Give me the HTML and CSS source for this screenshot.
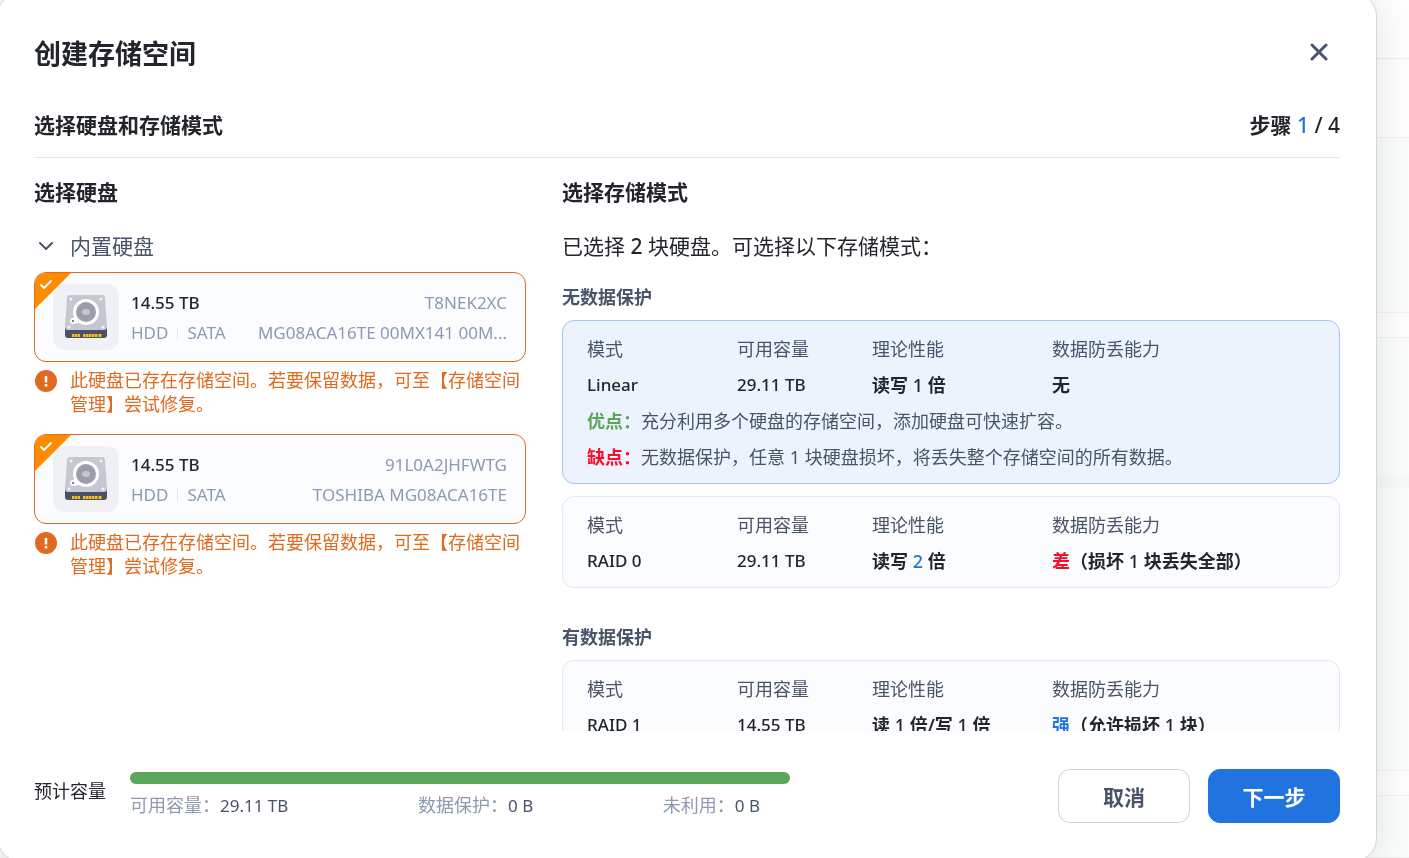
FILE: index.html
```html
<!DOCTYPE html>
<html lang="zh-CN">
<head>
  <meta charset="UTF-8" />
  <meta name="viewport" content="width=device-width, initial-scale=1.0" />
  <title>创建存储空间</title>
  <link rel="stylesheet" href="styles.css">
</head>
<body>
  <svg width="0" height="0" class="sprite" aria-hidden="true">
    <symbol id="icon-disk" viewBox="0 0 66 66">
      <path d="M12 43h42v8a3 3 0 0 1-3 3H15a3 3 0 0 1-3-3z" fill="#4c5266" />
      <path d="M17 11h32a3 3 0 0 1 3 3l2 29a3 3 0 0 1-3 3H15a3 3 0 0 1-3-3l2-29a3 3 0 0 1 3-3z" fill="#c5c7d1" />
      <path d="M19 50h8v3h-8zM30 50h19v3H30z" fill="#a8842c" />
      <path d="M20 50v3M23 50v3M26 50v3M31 50v3M34 50v3M37 50v3M40 50v3M43 50v3M47 50v3" stroke="#f7bf1d" stroke-width="2" />
      <circle cx="33" cy="28" r="13" fill="#fff" />
      <circle cx="20" cy="37" r="3" fill="#fff" />
      <path d="M20 34l4-4 4 8-7 2z" fill="#fff" />
      <circle cx="33" cy="28" r="10" fill="#9b9eaa" />
      <ellipse cx="33" cy="28" rx="4" ry="3" fill="#c5c7d1" />
      <circle cx="20" cy="37" r="1" fill="#4c5266" />
      <g fill="#f2f3f6">
        <circle cx="18" cy="15" r="1.5" />
        <circle cx="48" cy="15" r="1.5" />
        <circle cx="16" cy="43" r="1.5" />
        <circle cx="50" cy="43" r="1.5" />
      </g>
    </symbol>
    <symbol id="icon-tick" viewBox="0 0 14 12">
      <path d="M2 6l3 3 7-7" fill="none" stroke="#fff" stroke-width="2" stroke-linecap="round" stroke-linejoin="round" />
    </symbol>
    <symbol id="icon-warn" viewBox="0 0 22 22">
      <circle cx="11" cy="11" r="11" fill="#e06a1f" />
      <path d="M11 6v6.500M11 14v2.500" stroke="#fff" stroke-width="2.500" />
    </symbol>
  </svg>

  <div class="page">
    <div class="page-bar"></div>
    <div class="page-title"></div>
    <div class="page-panel panel-top"></div>
    <div class="page-gap"></div>
    <div class="page-panel panel-mid"></div>
    <div class="page-band"></div>
    <div class="page-panel panel-low"></div>
    <div class="page-gap"></div>
    <div class="page-panel panel-end"></div>
  </div>

  <div class="dialog" role="dialog" aria-labelledby="dialogTitle">
    <header class="dialog-header">
      <h1 id="dialogTitle">创建存储空间</h1>
      <button class="close" type="button" aria-label="关闭">
        <svg width="18" height="18" viewBox="0 0 18 18"><path d="M2 2l14 14M16 2L2 16" stroke="#48546a" stroke-width="3" stroke-linecap="round" /></svg>
      </button>
    </header>

    <div class="step-row">
      <h2>选择硬盘和存储模式</h2>
      <div class="step">步骤 <span class="num"><span class="blue">1</span> / 4</span></div>
    </div>

    <div class="columns">
      <section class="disks">
        <h3>选择硬盘</h3>
        <button class="group-toggle" type="button">
          <svg width="24" height="24" viewBox="0 0 24 24"><path d="M6 9l6 6 6-6" fill="none" stroke="#48546a" stroke-width="2" stroke-linecap="round" stroke-linejoin="round" /></svg>
          内置硬盘
        </button>

        <label class="disk">
          <input type="checkbox" class="disk-check" checked />
          <svg class="tick" width="14" height="12"><use href="#icon-tick" /></svg>
          <span class="disk-icon"><svg width="66" height="66"><use href="#icon-disk" /></svg></span>
          <span class="disk-info">
            <span class="disk-line"><b>14.55 TB</b><span class="right">T8NEK2XC</span></span>
            <span class="disk-line"><span>HDD</span><i class="split"></i><span>SATA</span><span class="right">MG08ACA16TE 00MX141 00M...</span></span>
          </span>
        </label>
        <p class="warn">
          <svg width="22" height="22"><use href="#icon-warn" /></svg>
          <span>此硬盘已存在存储空间。若要保留数据，可至【存储空间管理】尝试修复。</span>
        </p>

        <label class="disk">
          <input type="checkbox" class="disk-check" checked />
          <svg class="tick" width="14" height="12"><use href="#icon-tick" /></svg>
          <span class="disk-icon"><svg width="66" height="66"><use href="#icon-disk" /></svg></span>
          <span class="disk-info">
            <span class="disk-line"><b>14.55 TB</b><span class="right">91L0A2JHFWTG</span></span>
            <span class="disk-line"><span>HDD</span><i class="split"></i><span>SATA</span><span class="right">TOSHIBA MG08ACA16TE</span></span>
          </span>
        </label>
        <p class="warn">
          <svg width="22" height="22"><use href="#icon-warn" /></svg>
          <span>此硬盘已存在存储空间。若要保留数据，可至【存储空间管理】尝试修复。</span>
        </p>
      </section>

      <section class="modes">
        <h3>选择存储模式</h3>
        <p class="summary">已选择 <b>2</b> 块硬盘。可选择以下存储模式：</p>

        <h4>无数据保护</h4>
        <div class="mode selected">
          <table>
            <thead><tr><th class="c-mode">模式</th><th class="c-size">可用容量</th><th class="c-speed">理论性能</th><th>数据防丢能力</th></tr></thead>
            <tbody><tr><td class="latin">Linear</td><td class="latin">29.11 TB</td><td>读写 <span class="num">1</span> 倍</td><td>无</td></tr></tbody>
          </table>
          <p><b class="green">优点：</b>充分利用多个硬盘的存储空间，添加硬盘可快速扩容。</p>
          <p><b class="red">缺点：</b>无数据保护，任意 1 块硬盘损坏，将丢失整个存储空间的所有数据。</p>
        </div>
        <div class="mode">
          <table>
            <thead><tr><th class="c-mode">模式</th><th class="c-size">可用容量</th><th class="c-speed">理论性能</th><th>数据防丢能力</th></tr></thead>
            <tbody><tr><td class="latin">RAID 0</td><td class="latin">29.11 TB</td><td>读写 <span class="num blue">2</span> 倍</td><td><span class="red">差</span>（损坏 <span class="num">1</span> 块丢失全部）</td></tr></tbody>
          </table>
        </div>

        <h4>有数据保护</h4>
        <div class="mode">
          <table>
            <thead><tr><th class="c-mode">模式</th><th class="c-size">可用容量</th><th class="c-speed">理论性能</th><th>数据防丢能力</th></tr></thead>
            <tbody><tr><td class="latin">RAID 1</td><td class="latin">14.55 TB</td><td>读 <span class="num">1</span> 倍/写 <span class="num">1</span> 倍</td><td><span class="blue">强</span>（允许损坏 <span class="num">1</span> 块）</td></tr></tbody>
          </table>
        </div>
      </section>
    </div>

    <footer class="dialog-footer">
      <div class="capacity-label">预计容量</div>
      <div class="capacity">
        <div class="bar"><div class="bar-used" style="width: 100%"></div></div>
        <div class="legend">
          <div>可用容量：<span>29.11 TB</span></div>
          <div>数据保护：<span>0 B</span></div>
          <div>未利用：<span>0 B</span></div>
        </div>
      </div>
      <div class="actions">
        <button class="btn" type="button">取消</button>
        <button class="btn primary" type="button">下一步</button>
      </div>
    </footer>
  </div>
</body>
</html>
```
FILE: styles.css
```css
* {
  box-sizing: border-box;
}

body {
  margin: 0;
  height: 100vh;
  overflow: hidden;
  background: #fff;
  color: #22262c;
  font-family: "Noto Sans", "Noto Sans CJK SC", sans-serif;
  font-size: 18px;
}

h1, h2, h3, h4, p {
  margin: 0;
}

button {
  font-family: inherit;
  cursor: pointer;
}

.sprite {
  position: absolute;
}

.blue { color: #2173df; }
.green { color: #5ba65a; }
.red { color: #ff0a2b; }

.num {
  font-weight: 500;
}

/* Page behind the dialog */
.page {
  display: flex;
  flex-direction: column;
  height: 100vh;
  background: #fdfdfd;
}

.page-bar {
  height: 59px;
  border-bottom: 1px solid #ebecec;
}

.page-title {
  height: 78px;
}

.page-panel {
  background: #fafcfb;
  border: solid #f0f2f2;
  border-width: 1px 0;
}

.panel-top { height: 176px; }
.panel-mid { height: 139px; border-bottom: 0; }
.panel-low { height: 283px; border-top: 0; }
.panel-end { flex: 1; }

.page-gap {
  height: 24px;
}

.page-band {
  height: 12px;
  background: #f6f7f8;
}

/* Dialog */
.dialog {
  position: fixed;
  inset: -8px 32px -4px -3px;
  display: flex;
  flex-direction: column;
  padding: 36px 36px 0;
  background: #fff;
  border: 1px solid #d3d6d8;
  border-radius: 24px;
  box-shadow: 0 6px 36px rgba(0, 0, 0, 0.1);
}

.dialog-header {
  display: flex;
  align-items: center;
  justify-content: space-between;
  height: 46px;
}

h1 {
  font-size: 27px;
}

.close {
  display: flex;
  padding: 12px;
  background: none;
  border: 0;
}

.step-row {
  display: flex;
  justify-content: space-between;
  margin-top: 34px;
  padding-bottom: 16px;
  border-bottom: 1px solid #e6e7e9;
}

h2, h3, .step {
  font-size: 21px;
  font-weight: 600;
  line-height: 32px;
}

.columns {
  flex: 1;
  min-height: 0;
  overflow: hidden;
  display: grid;
  grid-template-columns: minmax(0, 492fr) minmax(0, 778fr);
  gap: 36px;
  padding-top: 18px;
}

/* Disk list */
.group-toggle {
  display: flex;
  align-items: center;
  gap: 12px;
  margin: 22px 0 10px;
  padding: 0;
  background: none;
  border: 0;
  color: #48546a;
  font-size: 21px;
  line-height: 32px;
}

.disk {
  position: relative;
  display: flex;
  align-items: center;
  gap: 12px;
  height: 90px;
  padding: 0 18px;
  overflow: hidden;
  background: #fafcfe;
  border: 1px solid #e06a1f;
  border-radius: 12px;
}

.disk-check {
  position: absolute;
  top: 0;
  left: 0;
  width: 36px;
  height: 36px;
  margin: 0;
  appearance: none;
  background: #ff8c00;
  clip-path: polygon(0 0, 100% 0, 0 100%);
}

.tick {
  position: absolute;
  top: 6px;
  left: 4px;
}

.disk-icon {
  display: flex;
  border-radius: 12px;
  background: #f0f1f5;
}

.disk-info {
  flex: 1;
  min-width: 0;
  padding-top: 2px;
  color: #8b9bb3;
  font-size: 17px;
}

.disk-line {
  display: flex;
  align-items: center;
  line-height: 30px;
}

.disk-line b {
  color: #22262c;
  font-weight: 500;
}

.split {
  width: 1px;
  height: 12px;
  margin: 0 9px;
  background: #e0e5ec;
}

.right {
  flex: 1;
  min-width: 0;
  margin-left: 20px;
  overflow: hidden;
  text-align: right;
  text-overflow: ellipsis;
  white-space: nowrap;
}

.warn {
  display: flex;
  gap: 13px;
  margin: 6px 0 18px;
  padding-left: 1px;
  color: #e06a1f;
  line-height: 24px;
}

.warn svg {
  flex: none;
  margin-top: 2px;
}

/* Storage modes */
.summary {
  margin: 22px 0 19px;
  font-size: 21px;
  line-height: 32px;
}

.summary b {
  font-weight: 500;
}

h4 {
  margin-bottom: 7px;
  color: #48546a;
  font-size: 18px;
  line-height: 32px;
}

.mode {
  padding: 10px 24px 8px;
  background: #fafcfe;
  border: 1px solid #e1e7f0;
  border-radius: 12px;
  color: #48546a;
  line-height: 36px;
}

.mode.selected {
  background: #ecf3fc;
  border-color: #a6c7f2;
}

.mode + .mode {
  margin-top: 12px;
}

.mode + h4 {
  margin-top: 33px;
}

table {
  width: 100%;
  table-layout: fixed;
  border-collapse: collapse;
}

th, td {
  height: 36px;
  padding: 0;
  line-height: 32px;
  text-align: left;
  white-space: nowrap;
}

th {
  font-weight: 400;
}

td {
  color: #22262c;
  font-weight: 600;
}

td.latin {
  font-size: 17px;
  font-weight: 500;
}

.c-mode { width: 150px; }
.c-size { width: 135px; }
.c-speed { width: 180px; }

/* Footer */
.dialog-footer {
  display: flex;
  align-items: center;
  padding: 38px 0;
}

.capacity-label {
  margin-right: 24px;
  padding-bottom: 12px;
}

.capacity {
  width: 660px;
}

.bar {
  height: 12px;
  overflow: hidden;
  border-radius: 6px;
  background: #e6e9ee;
}

.bar-used {
  height: 12px;
  background: #5ba65a;
}

.legend {
  display: flex;
  justify-content: space-between;
  margin-top: 7px;
  padding: 0 30px 1px 0;
  color: #8b9bb3;
  line-height: 28px;
}

.legend span {
  color: #48546a;
  font-size: 17px;
}

.actions {
  display: flex;
  gap: 18px;
  margin-left: auto;
}

.btn {
  width: 132px;
  height: 54px;
  background: #fff;
  border: 1px solid #ccd5e0;
  border-radius: 12px;
  color: #48546a;
  font-size: 21px;
  font-weight: 700;
}

.btn.primary {
  background: #2173df;
  border-color: #2173df;
  color: #fff;
}
```
